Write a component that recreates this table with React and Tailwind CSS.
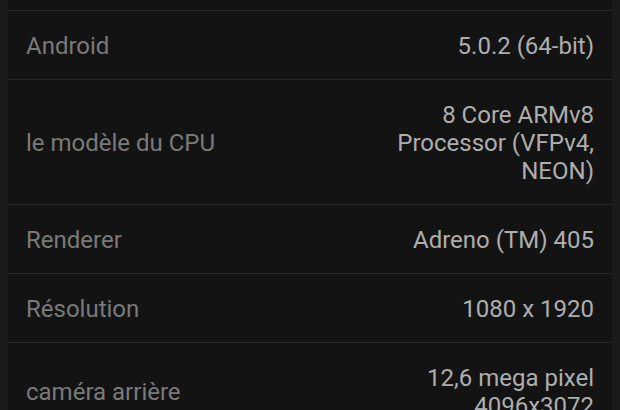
import React from 'react';

const rows = [
  { label: 'Android', value: '5.0.2 (64-bit)' },
  { label: 'le modèle du CPU', value: '8 Core ARMv8 Processor (VFPv4, NEON)' },
  { label: 'Renderer', value: 'Adreno (TM) 405' },
  { label: 'Résolution', value: '1080 x 1920' },
  { label: 'caméra arrière', value: '12,6 mega pixel 4096x3072' },
];

const App = () => {
  return (
    <div
      className="h-[410px] w-[620px] overflow-hidden bg-[#1b1b1b] px-[8px]"
      style={{ fontFamily: 'Roboto, "Liberation Sans", sans-serif' }}
    >
      <div className="h-full bg-[#131313]">
        {/* previous row, cut off at the top */}
        <div className="h-[11px] border-b border-[#282828]" />

        {rows.map(row => (
          <div
            key={row.label}
            className="flex items-center justify-between border-b border-[#282828] px-[18px] pt-[21px] pb-[19px] text-[24px] leading-[28px]"
          >
            <span className="text-[#7a7a7a]">{row.label}</span>
            <span className="max-w-[230px] text-right text-[#aeaeae]">{row.value}</span>
          </div>
        ))}
      </div>
    </div>
  );
};

export default App;
